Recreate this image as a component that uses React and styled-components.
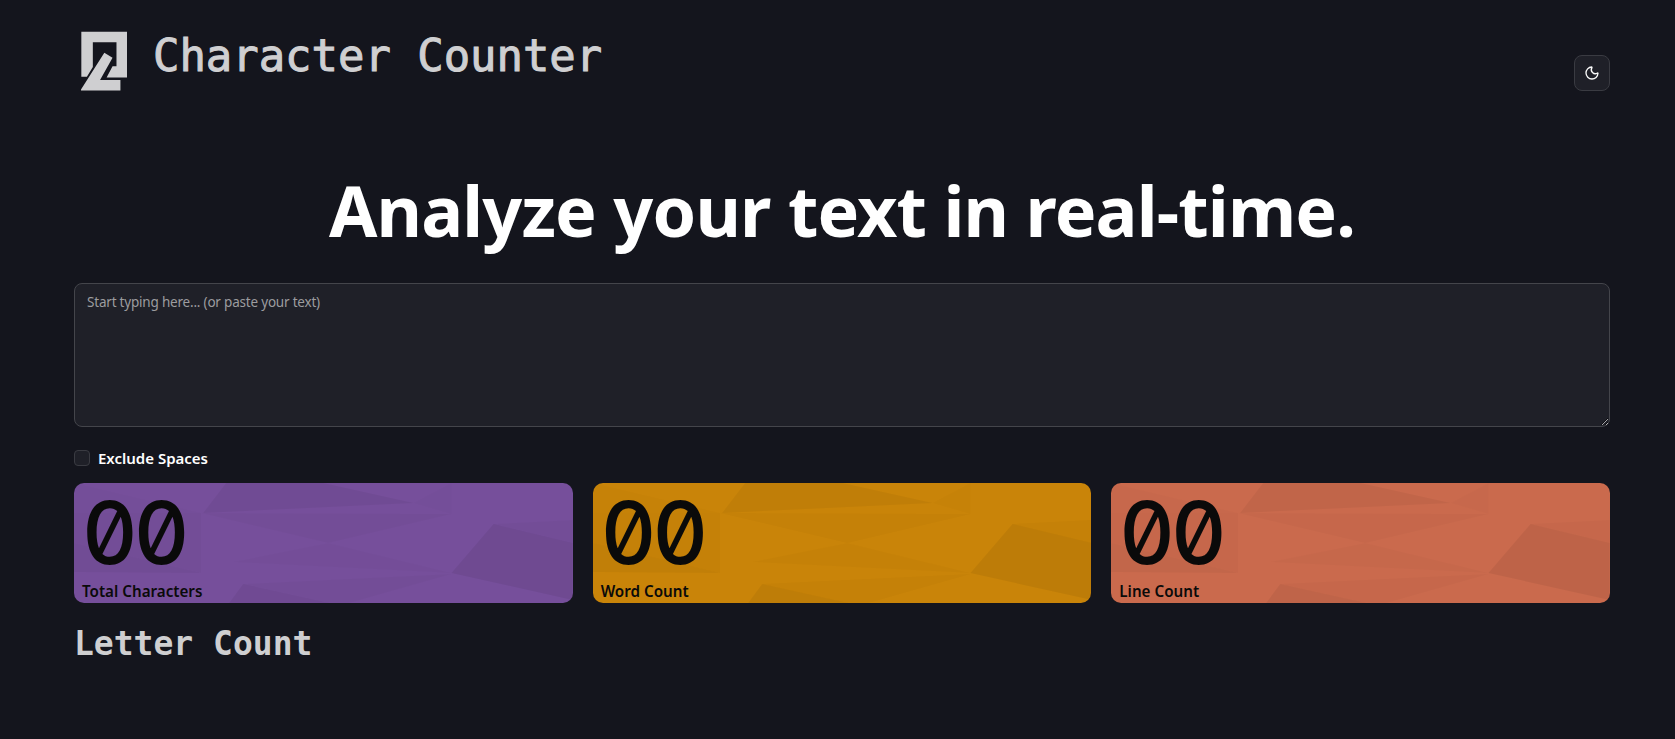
import React from 'react';
import styled, { createGlobalStyle } from 'styled-components';
import { Moon } from 'lucide-react';

const GlobalStyle = createGlobalStyle`
  html, body {
    margin: 0;
    background: #14151d;
    color-scheme: dark;
  }
  * {
    box-sizing: border-box;
  }
`;

const mono = `'DejaVu Sans Mono', monospace`;
const sans = `'Noto Sans', sans-serif`;

const Page = styled.div`
  width: 1536px;
  min-height: 739px;
  margin-left: 74px;
  font-family: ${sans};
`;

const Header = styled.header`
  display: flex;
  align-items: flex-end;
  justify-content: space-between;
  padding-top: 31px;
`;

const Brand = styled.div`
  display: flex;
  align-items: flex-start;
  gap: 26px;
  margin-left: 7px;
`;

const Title = styled.h1`
  margin: 0;
  font-family: ${mono};
  font-size: 43.9px;
  font-weight: 400;
  line-height: 50px;
  color: #cfcfd1;
  -webkit-text-stroke: 1px #cfcfd1;
`;

const ThemeButton = styled.button`
  display: flex;
  align-items: center;
  justify-content: center;
  width: 36px;
  height: 36px;
  padding: 0;
  border: 1px solid #3a3b42;
  border-radius: 8px;
  background: #1f2028;
  color: #fafafa;
`;

const Headline = styled.h2`
  margin: 69px 0 23px;
  font-size: 70px;
  font-weight: 700;
  letter-spacing: -0.84px;
  line-height: 100px;
  text-align: center;
  color: #fff;
`;

const TextBox = styled.textarea`
  display: block;
  width: 100%;
  height: 144px;
  padding: 8px 12px;
  border: 1px solid #44454b;
  border-radius: 8px;
  outline: none;
  background: #1f2028;
  color: #fff;
  font-family: ${sans};
  font-size: 13.5px;
  letter-spacing: -0.2px;
  line-height: 20px;
  &::placeholder {
    color: #9c9c9f;
  }
`;

const OptionRow = styled.label`
  display: flex;
  align-items: center;
  gap: 8px;
  margin-top: 21px;
  font-size: 15px;
  font-weight: 600;
  line-height: 20px;
  color: #fff;
`;

const Check = styled.input`
  appearance: none;
  width: 16px;
  height: 16px;
  margin: 0;
  border: 1px solid #3a3b42;
  border-radius: 4px;
  background: #1f2028;
`;

const Cards = styled.section`
  display: grid;
  grid-template-columns: repeat(3, 1fr);
  gap: 20px;
  margin-top: 15px;
`;

const Card = styled.article`
  position: relative;
  height: 120px;
  padding: 12px 8px 0;
  border-radius: 10px;
  background: ${({ $color }) => $color};
  color: #0a0a0a;
`;

const Pattern = styled.svg`
  position: absolute;
  inset: 0;
  width: 100%;
  height: 100%;
  border-radius: 10px;
  overflow: hidden;
`;

const Value = styled.div`
  position: relative;
  font-family: Inter, sans-serif;
  font-feature-settings: 'zero' 1, 'tnum' 1;
  font-size: 86px;
  font-weight: 500;
  letter-spacing: -4px;
  line-height: 76px;
`;

const Label = styled.div`
  position: relative;
  margin-top: 10px;
  font-size: 15.2px;
  font-weight: 600;
  line-height: 20px;
`;

const SubTitle = styled.h3`
  margin: 21px 0 0;
  font-family: ${mono};
  font-size: 33px;
  font-weight: 700;
  line-height: 40px;
  color: #cfcfd1;
`;

const shards = [
  ['129,30 152,0 249,0 339,20', 0.045],
  ['127,30 377,31 254,60', 0.02],
  ['419,41 498,60 498,117 377,90', 0.06],
  ['419,41 498,37 498,60', 0.02],
  ['0,60 127,90 0,89', 0.035],
  ['0,0 127,30 0,30', 0.012],
  ['169,101 255,120 155,120', 0.05],
  ['169,101 377,91 275,120 255,120', 0.02],
  ['254,60 377,90 159,79', 0.015],
  ['0,30 127,30 127,90 0,60', 0.02],
  ['339,20 377,0 377,31', 0.012],
];

function Logo() {
  return (
    <svg width="46" height="60" viewBox="0 0 140 180" fill="#cfcfd1">
      <path d="M1 1H140V140H78L96 106H108V33H36V108L18 138H1Z" />
      <path d="M71 65L96 80L58 148H120V180H-2Z" />
    </svg>
  );
}

function StatCard({ color, label }) {
  return (
    <Card $color={color}>
      <Pattern viewBox="0 0 498 120" preserveAspectRatio="none">
        {shards.map(([points, opacity]) => (
          <polygon key={points} points={points} fill="#000" fillOpacity={opacity} />
        ))}
      </Pattern>
      <Value>00</Value>
      <Label>{label}</Label>
    </Card>
  );
}

export default function App() {
  return (
    <Page>
      <GlobalStyle />
      <Header>
        <Brand>
          <Logo />
          <Title>Character Counter</Title>
        </Brand>
        <ThemeButton aria-label="Toggle theme">
          <Moon size={16} />
        </ThemeButton>
      </Header>
      <Headline>Analyze your text in real-time.</Headline>
      <TextBox placeholder="Start typing here... (or paste your text)" />
      <OptionRow>
        <Check type="checkbox" />
        Exclude Spaces
      </OptionRow>
      <Cards>
        <StatCard color="#764f9b" label="Total Characters" />
        <StatCard color="#c98409" label="Word Count" />
        <StatCard color="#ca6a4d" label="Line Count" />
      </Cards>
      <SubTitle>Letter Count</SubTitle>
    </Page>
  );
}
